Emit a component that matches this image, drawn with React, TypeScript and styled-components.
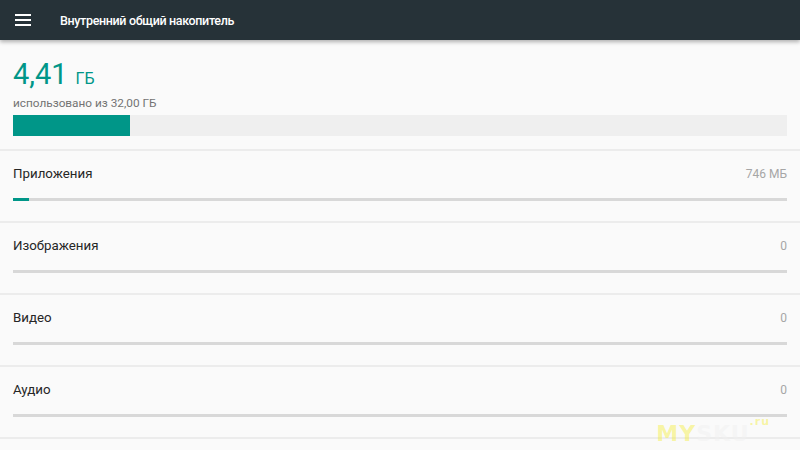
import styled, { createGlobalStyle } from "styled-components";

interface Category {
    name: string,
    size: string,
    percent: number
}

const categories: Category[] = [
    { name: "Приложения", size: "746 МБ", percent: 2.1 },
    { name: "Изображения", size: "0", percent: 0 },
    { name: "Видео", size: "0", percent: 0 },
    { name: "Аудио", size: "0", percent: 0 },
]

const MenuIcon = () => (
    <svg width="16" height="12" viewBox="0 0 16 12">
        <rect x="0" y="0" width="16" height="2" fill="#fff" />
        <rect x="0" y="5" width="16" height="2" fill="#fff" />
        <rect x="0" y="10" width="16" height="2" fill="#fff" />
    </svg>
)

const App = () => {
    return (
        <Screen>
            <GlobalStyle />
            <Toolbar>
                <MenuButton><MenuIcon /></MenuButton>
                <Title>Внутренний общий накопитель</Title>
            </Toolbar>
            <Summary>
                <Used>
                    <Amount>4,41</Amount>
                    <Unit>ГБ</Unit>
                </Used>
                <Total>использовано из 32,00 ГБ</Total>
                <BigBar>
                    <Fill style={{ width: "15.1%" }} />
                </BigBar>
            </Summary>
            {categories.map((c) => (
                <Row key={c.name}>
                    <RowHead>
                        <RowName>{c.name}</RowName>
                        <RowSize>{c.size}</RowSize>
                    </RowHead>
                    <SmallBar>
                        <Fill style={{ width: `${c.percent}%` }} />
                    </SmallBar>
                </Row>
            ))}
            <Watermark><b>MY</b>SKU<small>.ru</small></Watermark>
        </Screen>
    )
}

export default App

const GlobalStyle = createGlobalStyle`
    html, body {
        margin: 0;
        padding: 0;
        background: #fafafa;
        font-family: Roboto, "Liberation Sans", sans-serif;
    }
`

const Screen = styled.div`
    position: relative;
    width: 800px;
    height: 450px;
    overflow: hidden;
    background: #fafafa;
`

const Toolbar = styled.div`
    position: relative;
    z-index: 1;
    display: flex;
    align-items: center;
    height: 40px;
    background: #263238;
    box-shadow: 0 2px 4px rgba(0, 0, 0, 0.3);
`

const MenuButton = styled.div`
    display: flex;
    align-items: center;
    justify-content: center;
    width: 16px;
    margin-left: 15px;
    margin-right: 29px;
`

const Title = styled.div`
    color: #ffffff;
    font-size: 12.5px;
    font-weight: 500;
    letter-spacing: -0.35px;
`

const Summary = styled.div`
    padding: 17px 13px 13px;
    border-bottom: 2px solid #ececec;
`

const Used = styled.div`
    display: flex;
    align-items: baseline;
    gap: 8px;
    color: #009688;
    line-height: 34px;
`

const Amount = styled.span`
    font-size: 29px;
`

const Unit = styled.span`
    font-size: 16px;
`

const Total = styled.div`
    margin-top: 0;
    font-size: 11.8px;
    color: #737373;
    line-height: 15px;
`

const BigBar = styled.div`
    height: 21px;
    margin-top: 4px;
    background: #efefef;
    display: flex;
`

const Fill = styled.div`
    height: 100%;
    background: #009688;
`

const Row = styled.div`
    height: 70px;
    padding: 0 13px;
    border-bottom: 2px solid #ececec;
    display: flex;
    flex-direction: column;
`

const RowHead = styled.div`
    display: flex;
    justify-content: space-between;
    align-items: baseline;
    margin-top: 15px;
    line-height: 16px;
`

const RowName = styled.span`
    font-size: 13.3px;
    color: #262626;
`

const RowSize = styled.span`
    font-size: 12px;
    color: #a6a6a6;
`

const SmallBar = styled.div`
    height: 3px;
    margin-top: 16px;
    background: #d8d8d8;
    display: flex;
`

const Watermark = styled.div`
    position: absolute;
    right: 30px;
    bottom: 4px;
    font-family: "DejaVu Sans", sans-serif;
    font-weight: 700;
    font-size: 22px;
    color: rgba(240, 240, 240, 0.5);
    letter-spacing: 1px;

    b {
        color: rgba(245, 238, 60, 0.45);
    }

    small {
        position: relative;
        top: -16px;
        font-size: 11px;
        color: rgba(245, 238, 60, 0.45);
    }
`
